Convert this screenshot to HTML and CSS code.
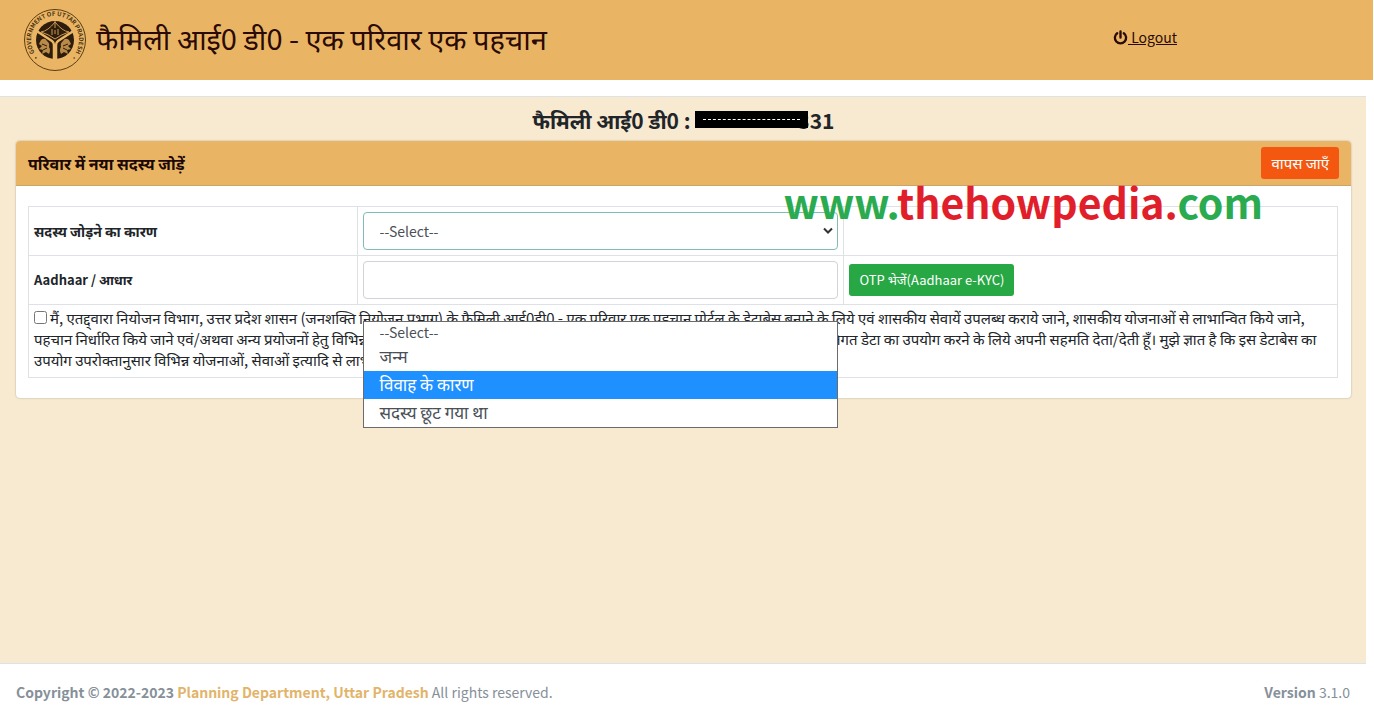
FILE: index.html
```html
<!DOCTYPE html>
<html lang="hi">

<head>
  <meta charset="UTF-8">
  <meta name="viewport" content="width=device-width, initial-scale=1.0">
  <title>फैमिली आई0 डी0</title>
  <link rel="stylesheet" href="styles.css">
</head>

<body>
  <header class="navbar">
    <div class="brand">
      <svg class="logo" viewBox="0 0 64 64" role="img" aria-label="Government of Uttar Pradesh">
        <defs>
          <path id="ring" d="M18 51.400 A24 24 0 1 1 46 51.400"/>
        </defs>
        <circle cx="32" cy="32" r="30.5" fill="none" stroke="#5b3d12" stroke-width="1"/>
        <text class="logo-text"><textPath href="#ring" startOffset="50%">• GOVERNMENT OF UTTAR PRADESH •</textPath></text>
        <circle cx="32" cy="32" r="19" fill="#2e1c0c"/>
        <!-- rivers -->
        <path d="M12 22 L29 33 Q31 34.500 31 37 V52 M33 52 V37 Q33 34.500 35 33 L52 22" fill="none" stroke="#eab564" stroke-width="2.500"/>
        <!-- bow and arrow -->
        <path d="M18 24 Q25 23 32 14 Q39 23 46 24 Q39 26 32 31 Q25 26 18 24 Z" fill="none" stroke="#c79a52" stroke-width="1"/>
        <path d="M32 13 V20 M29 21 V27 M32 22 V26 M35 21 V27" stroke="#c79a52" stroke-width="1"/>
        <!-- fishes -->
        <path d="M18 32 q4 -3 6 1 q3 2 2 6 q2 3 0 7 l-3 -2 l-4 2 l1 -4 l-4 -1 l3 -3 l-3 -2 z" fill="#b98b48"/>
        <path d="M46 32 q-4 -3 -6 1 q-3 2 -2 6 q-2 3 0 7 l3 -2 l4 2 l-1 -4 l4 -1 l-3 -3 l3 -2 z" fill="#b98b48"/>
        <path d="M19 36 l5 2 M20 42 l4 -2 M45 36 l-5 2 M44 42 l-4 -2" stroke="#2e1c0c" stroke-width="1"/>
      </svg>
      <h1 class="title">फैमिली आई0 डी0 - एक परिवार एक पहचान</h1>
    </div>
    <a class="logout" href="#">
      <svg class="power" viewBox="0 0 16 16" aria-hidden="true">
        <path d="M4.500 3.400 A6 6 0 1 0 11.500 3.400 M8 1.500 V8" fill="none" stroke="#2b0a05" stroke-width="2.500" stroke-linecap="round"/>
      </svg><span class="logout-text">&nbsp;Logout</span>
    </a>
  </header>

  <main class="content">
    <h2 class="family-id">फैमिली आई0 डी0 : <span class="masked"></span><span>331</span></h2>

    <section class="card">
      <div class="card-header">
        <h3 class="card-title">परिवार में नया सदस्य जोड़ें</h3>
        <button type="button" class="btn btn-back">वापस जाएँ</button>
      </div>
      <div class="card-body">
        <table class="form-table">
          <tr>
            <th class="col-label"><label for="reason" class="hi-label">सदस्य जोड़ने का कारण</label></th>
            <td class="col-field">
              <div class="select-box">
                <select id="reason" class="form-control select">
                  <option>--Select--</option>
                  <option>जन्म</option>
                  <option>विवाह के कारण</option>
                  <option>सदस्य छूट गया था</option>
                </select>
                <svg class="caret" viewBox="0 0 10 8" aria-hidden="true">
                  <path d="M1 1.500 L5 5.500 L9 1.500" fill="none" stroke="#333" stroke-width="2"/>
                </svg>
                <ul class="options">
                  <li>--Select--</li>
                  <li>जन्म</li>
                  <li class="hover">विवाह के कारण</li>
                  <li>सदस्य छूट गया था</li>
                </ul>
              </div>
            </td>
            <td class="col-action"></td>
          </tr>
          <tr>
            <th><label for="aadhaar">Aadhaar / आधार</label></th>
            <td><input type="text" id="aadhaar" class="form-control"></td>
            <td><button type="button" class="btn btn-otp">OTP भेजें(Aadhaar e-KYC)</button></td>
          </tr>
          <tr>
            <td colspan="3" class="consent">
              <input type="checkbox" id="agree" class="check"><label for="agree">मैं, एतद्द्वारा नियोजन विभाग, उत्तर प्रदेश शासन (जनशक्ति नियोजन प्रभाग) के फैमिली आई0डी0 - एक परिवार एक पहचान पोर्टल के डेटाबेस बनाने के लिये एवं शासकीय सेवायें उपलब्ध कराये जाने, शासकीय योजनाओं से लाभान्वित किये जाने,<br>
              पहचान निर्धारित किये जाने एवं/अथवा अन्य प्रयोजनों हेतु विभिन्न विभागों के डेटाबेस में उपलब्ध मेरे एवं मेरे परिवार के सभी सदस्यों के आधार एवं अन्य व्यक्तिगत डेटा का उपयोग करने के लिये अपनी सहमति देता/देती हूँ। मुझे ज्ञात है कि इस डेटाबेस का<br>
              उपयोग उपरोक्तानुसार विभिन्न योजनाओं, सेवाओं इत्यादि से लाभ हेतु किया जायेगा।</label>
            </td>
          </tr>
        </table>
      </div>
      <p class="watermark">www.<span>thehowpedia.</span>com</p>
    </section>
  </main>

  <footer class="footer">
    <div><b>Copyright © 2022-2023 <a href="#">Planning Department, Uttar Pradesh</a></b> All rights reserved.</div>
    <div><b>Version</b> 3.1.0</div>
  </footer>
</body>

</html>
```
FILE: styles.css
```css
* {
  box-sizing: border-box;
}
body {
  display: flex;
  flex-direction: column;
  min-height: 100vh;
  margin: 0;
  background: #fff;
  color: #212529;
  font: 14px/24px "Noto Sans CJK SC", "Noto Sans Devanagari", "Noto Sans", sans-serif;
}
h1, h2, h3, p {
  margin: 0;
}
button, input, select {
  font-family: inherit;
}

/* 顶部 */
.navbar {
  display: flex;
  justify-content: space-between;
  align-items: center;
  height: 80px;
  margin-right: 1px;
  padding: 0 196px 0 23px;
  background: #e9b564;
}
.brand {
  display: flex;
  align-items: center;
  gap: 9px;
}
.logo {
  width: 64px;
  height: 64px;
}
.logo-text {
  font-size: 6px;
  font-weight: 700;
  text-anchor: middle;
  fill: #4a300f;
}
.title {
  padding-bottom: 6px;
  font-size: 29px;
  font-weight: 400;
  line-height: 40px;
  color: #2b0a05;
}
.logout {
  display: flex;
  align-items: center;
  padding-bottom: 6px;
  color: #2b0a05;
  text-decoration: none;
}
.logout-text {
  text-decoration: underline;
}
.power {
  width: 15px;
  height: 15px;
}

/* 内容 */
.content {
  flex: 1;
  margin: 16px 8px 0 0;
  padding: 0 15px 0 16px;
  border-top: 1px solid #dee2e6;
  background: #f8ead1;
}
.family-id {
  display: flex;
  justify-content: center;
  align-items: center;
  height: 44px;
  padding-top: 2px;
  font-size: 21px;
  white-space: pre;
}
.masked {
  position: relative;
  width: 113px;
  height: 17px;
  margin: 0 -11px 2px 0;
  padding: 8px;
  background: #000;
}
.masked::before {
  content: "";
  display: block;
  border-top: 1px dashed #fff;
}
.card {
  position: relative;
  border-radius: 4px;
  background: #fff;
  box-shadow: 0 0 2px rgba(0, 0, 0, .3);
}
.card-header {
  display: flex;
  justify-content: space-between;
  align-items: center;
  height: 45px;
  padding: 0 12px;
  border-bottom: 1px solid #c9a56a;
  border-radius: 4px 4px 0 0;
  background: #e9b564;
}
.card-title {
  font-size: 16px;
  color: #1c0805;
}
.card-body {
  padding: 20px 13px 20px 12px;
}
.btn {
  height: 32px;
  padding: 0 10px;
  border: 0;
  border-radius: 3px;
  color: #fff;
  line-height: 24px;
}
.btn-back {
  background: #f4570f;
  font-size: 15px;
}
.btn-otp {
  background: #28a745;
  font-size: 13px;
}

/* 表格 */
.form-table {
  width: 100%;
  table-layout: fixed;
  border-collapse: collapse;
  font-size: 13px;
}
.form-table th, .form-table td {
  height: 49px;
  padding: 5px;
  border: 1px solid #dee2e6;
  text-align: left;
}
.form-table .col-label {
  width: 25.1%;
}
.form-table .col-field {
  width: 37.2%;
}
.hi-label {
  font-size: 14px;
}
.form-control {
  display: block;
  width: 100%;
  height: 38px;
  padding: 0 12px;
  border: 1px solid #ced4da;
  border-radius: 4px;
  background: #fff;
  color: #495057;
  font-size: 14px;
}
.select-box {
  position: relative;
}
.select {
  padding: 0 16px;
  border-color: #80bdb8;
  appearance: none;
}
.caret {
  position: absolute;
  top: 15px;
  right: 5px;
  width: 10px;
  height: 8px;
}
.options {
  position: absolute;
  top: 109px;
  left: 0;
  z-index: 5;
  width: 100%;
  margin: 0;
  padding: 0;
  border: 1px solid #6b6b6b;
  background: #fff;
  color: #495057;
  font-size: 17px;
  list-style: none;
}
.options li {
  height: 28px;
  padding: 0 16px;
  line-height: 26px;
}
.options li:first-child {
  height: 21px;
  font-size: 14px;
  line-height: 20px;
}
.options .hover {
  background: #1e90ff;
  color: #fff;
}
.form-table .consent {
  height: 73px;
  padding: 2px 5px 7px;
  font-size: 15px;
  line-height: 21px;
  white-space: nowrap;
}
.check {
  width: 13px;
  height: 13px;
  margin: 0 3px 0 0;
  vertical-align: 0;
}

/* 水印 */
.watermark {
  position: absolute;
  top: 33px;
  right: 88px;
  z-index: 6;
  color: #2aab4f;
  font-size: 41px;
  font-weight: 700;
  line-height: 54px;
}
.watermark span {
  color: #e01f2b;
}

/* 底部 */
.footer {
  display: flex;
  justify-content: space-between;
  height: 57px;
  margin-right: 8px;
  padding: 16px 16px;
  border-top: 1px solid #dee2e6;
  color: #869099;
}
.footer a {
  color: #e2b46a;
  text-decoration: none;
}
```
